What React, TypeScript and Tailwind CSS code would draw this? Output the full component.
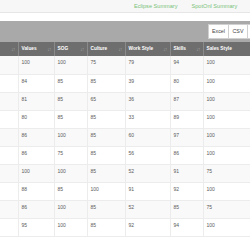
import React from "react";

const columns = [
  { label: "Area", width: "w-[58px]" },
  { label: "Values", width: "w-[36px]" },
  { label: "SOG", width: "w-[33px]" },
  { label: "Culture", width: "w-[38px]" },
  { label: "Work Style", width: "w-[45px]" },
  { label: "Skills", width: "w-[33px]" },
  { label: "Sales Style", width: "w-[60px]" },
];

const rows = [
  [100, 100, 75, 79, 94, 100],
  [84, 85, 85, 39, 80, 100],
  [81, 85, 65, 36, 87, 100],
  [80, 85, 85, 33, 89, 100],
  [86, 100, 85, 60, 97, 100],
  [86, 75, 85, 56, 86, 100],
  [100, 100, 85, 52, 91, 75],
  [88, 85, 100, 91, 92, 100],
  [86, 100, 85, 52, 85, 75],
  [95, 100, 85, 92, 94, 100],
];

function SortIcon() {
  return <span className="text-[5.5px] text-[#a5a5a5] tracking-[-1px] mr-[3px] font-normal">↓↑</span>;
}

export default function App() {
  return (
    <div className="w-[250px] h-[250px] overflow-hidden bg-white font-['Liberation_Sans',Arial,sans-serif]">
      {/* Top nav */}
      <div className="h-[13px] bg-[#f7f7f7] border-b border-[#e6e6e6] flex items-center whitespace-nowrap text-[5.6px] text-[#79c279]">
        <span className="ml-[134px]">Eclipse Summary</span>
        <span className="ml-[14px]">SpotOnl Summary</span>
        <span className="ml-[14px]">Vi</span>
      </div>

      <div className="h-[8px]" />

      {/* Export toolbar */}
      <div className="h-[21px] bg-[#a9a9a9] flex items-center whitespace-nowrap">
        <div className="flex ml-[208px]">
          <button className="h-[15px] w-[21px] shrink-0 bg-white border border-[#d0d0d0] text-[5.3px] text-[#444]">Excel</button>
          <button className="h-[15px] w-[19px] shrink-0 bg-white border border-l-0 border-[#d0d0d0] text-[5.3px] text-[#444]">CSV</button>
          <button className="h-[15px] w-[20px] shrink-0 bg-white border border-l-0 border-[#d0d0d0] text-[5.3px] text-[#444]">PDF</button>
        </div>
      </div>

      {/* Table */}
      <div className="ml-[-40px]">
        <table className="w-[303px] border-collapse table-fixed text-[5px] whitespace-nowrap">
          <colgroup>
            {columns.map((c) => (
              <col key={c.label} className={c.width} />
            ))}
          </colgroup>
          <thead>
            <tr className="h-[14px] bg-[#6e6e6e] text-white">
              {columns.map((c) => (
                <th key={c.label} className="p-0 border-r border-[#8a8a8a] text-left text-[4.8px] font-bold overflow-hidden">
                  <div className="flex items-center justify-between pl-[3px]">
                    <span>{c.label}</span>
                    <SortIcon />
                  </div>
                </th>
              ))}
            </tr>
          </thead>
          <tbody>
            {rows.map((r, i) => (
              <tr key={i} className={`h-[18px] border-b border-[#ececec] ${i % 2 === 0 ? "bg-[#f9f9f9]" : "bg-white"}`}>
                <td className="p-0 border-r border-[#ececec]" />
                {r.map((v, j) => (
                  <td key={j} className="p-0 pl-[3px] pt-[2px] align-top leading-[8px] border-r border-[#ececec] text-[#5a5a5a]">
                    {v}
                  </td>
                ))}
              </tr>
            ))}
          </tbody>
        </table>
      </div>
    </div>
  );
}
